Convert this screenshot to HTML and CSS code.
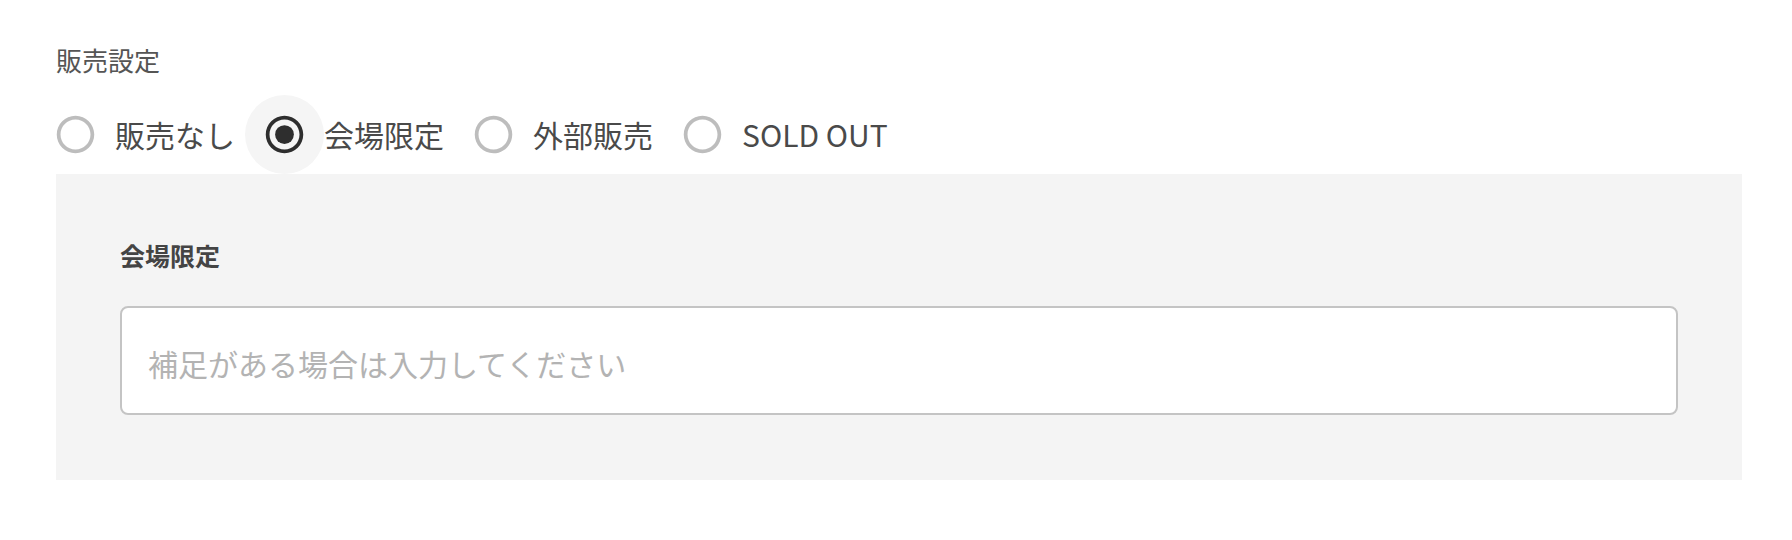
FILE: index.html
```html
<!DOCTYPE html>
<html lang="ja">
<head>
    <meta charset="UTF-8">
    <meta name="viewport" content="width=device-width, initial-scale=1.0">
    <title>販売設定</title>
    <link rel="stylesheet" href="styles.css">
</head>
<body>
    <div class="page">
        <div class="field-title">販売設定</div>

        <div class="radio-group">
            <label class="option">
                <span class="radio-btn">
                    <svg viewBox="0 0 24 24"><path d="M12 2C6.48 2 2 6.48 2 12s4.48 10 10 10 10-4.48 10-10S17.52 2 12 2zm0 18c-4.42 0-8-3.58-8-8s3.58-8 8-8 8 3.58 8 8-3.58 8-8 8z"/></svg>
                </span>
                <span class="option-label">販売なし</span>
            </label>
            <label class="option checked">
                <span class="radio-btn">
                    <svg viewBox="0 0 24 24">
                        <path d="M12 2C6.48 2 2 6.48 2 12s4.48 10 10 10 10-4.48 10-10S17.52 2 12 2zm0 18c-4.42 0-8-3.58-8-8s3.58-8 8-8 8 3.58 8 8-3.58 8-8 8z"/>
                        <circle cx="12" cy="12" r="5"/>
                    </svg>
                </span>
                <span class="option-label">会場限定</span>
            </label>
            <label class="option">
                <span class="radio-btn">
                    <svg viewBox="0 0 24 24"><path d="M12 2C6.48 2 2 6.48 2 12s4.48 10 10 10 10-4.48 10-10S17.52 2 12 2zm0 18c-4.42 0-8-3.58-8-8s3.58-8 8-8 8 3.58 8 8-3.58 8-8 8z"/></svg>
                </span>
                <span class="option-label">外部販売</span>
            </label>
            <label class="option">
                <span class="radio-btn">
                    <svg viewBox="0 0 24 24"><path d="M12 2C6.48 2 2 6.48 2 12s4.48 10 10 10 10-4.48 10-10S17.52 2 12 2zm0 18c-4.42 0-8-3.58-8-8s3.58-8 8-8 8 3.58 8 8-3.58 8-8 8z"/></svg>
                </span>
                <span class="option-label">SOLD OUT</span>
            </label>
        </div>

        <div class="panel">
            <div class="panel-title">会場限定</div>
            <input class="note-input" type="text" placeholder="補足がある場合は入力してください">
        </div>
    </div>
</body>
</html>
```

FILE: styles.css
```css
* {
    margin: 0;
    padding: 0;
    box-sizing: border-box;
}

body {
    background: #fff;
    font-family: "Noto Sans CJK JP", "Noto Sans", sans-serif;
    color: #4a4a4a;
}

.page {
    padding: 40px 50px 0 56px;
}

.field-title {
    font-size: 26px;
    line-height: 39px;
    color: #555;
    margin-bottom: 16px;
}

.radio-group {
    display: flex;
    align-items: center;
}

.option {
    display: flex;
    align-items: center;
    margin-left: -20px;
    margin-right: 30px;
    cursor: pointer;
}

.radio-btn {
    width: 79px;
    height: 79px;
    border-radius: 50%;
    display: flex;
    align-items: center;
    justify-content: center;
}

.radio-btn svg {
    width: 45px;
    height: 45px;
    fill: #bdbdbd;
}

.option.checked .radio-btn {
    background: #f5f5f5;
}

.option.checked .radio-btn svg {
    fill: #2e2e2e;
}

.option-label {
    font-size: 30px;
    line-height: 45px;
    color: #4a4a4a;
}

.panel {
    background: #f4f4f4;
    padding: 63px 64px 65px;
}

.panel-title {
    font-size: 25px;
    line-height: 37px;
    font-weight: bold;
    color: #444;
    margin-bottom: 32px;
}

.note-input {
    display: block;
    width: 100%;
    height: 109px;
    border: 2px solid #c4c4c4;
    border-radius: 8px;
    background: #fff;
    padding: 5px 26px 0;
    font-family: inherit;
    font-size: 30px;
    color: #444;
    outline: none;
}

.note-input::placeholder {
    color: #b3b3b3;
}
```
